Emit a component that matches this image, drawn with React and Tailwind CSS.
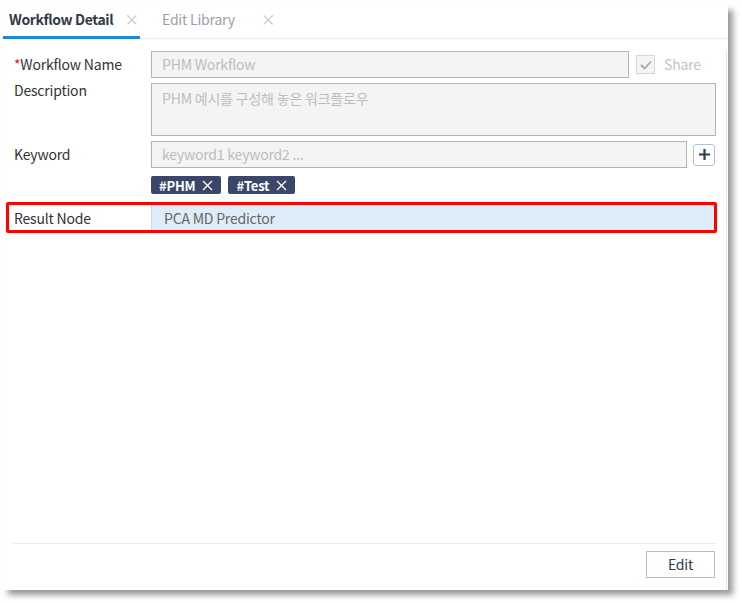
import React from 'react';

const font = { fontFamily: '"Noto Sans CJK KR", "Noto Sans", sans-serif' };

const Tag = ({ label }) => (
  <span className="inline-flex items-center h-[18px] pl-[8px] pr-[8px] gap-[7px] rounded-[2px] bg-[#3b4669] text-white text-[13px] font-bold leading-none">
    {label}
    <svg width="11" height="11" viewBox="0 0 11 11" fill="none" stroke="#fff" strokeWidth="1.3">
      <path d="M1 1l9 9M10 1l-9 9" />
    </svg>
  </span>
);

export default function App() {
  return (
    <div className="w-[742px] h-[603px] bg-white pt-[5px] pl-[3px] tracking-[-0.2px]" style={font}>
      <div className="w-[725px] h-[585px] bg-white flex flex-col shadow-[5px_5px_6px_rgba(0,0,0,0.4)]">
        {/* Tabs */}
        <div className="flex h-[34px] border-b border-[#ececec] text-[14px] whitespace-nowrap">
          <div className="relative flex items-center w-[137px] pl-[6px] pb-[4px]">
            <span className="font-bold text-[#333a45] tracking-[-0.4px]">Workflow Detail</span>
            <span className="ml-[11px] text-[#c4c4c4] text-[15px]">×</span>
            <div className="absolute left-0 right-0 bottom-[-1px] h-[3px] bg-[#1e88d8]" />
          </div>
          <div className="flex items-center pl-[22px] pb-[4px]">
            <span className="text-[#9aa0a8]">Edit Library</span>
            <span className="ml-[26px] text-[#c4c4c4] text-[15px]">×</span>
          </div>
        </div>

        {/* Body */}
        <div className="flex-1 flex flex-col border-r border-[#e6e6e6] mr-[1px] mt-[12px]">
          <div className="flex flex-col text-[14px] text-[#333] pl-[11px]">
            <div className="flex items-center h-[27px]">
              <div className="w-[137px]"><span className="text-[#d62020]">*</span>Workflow Name</div>
              <div className="w-[478px] h-[27px] border border-[#b3b3b3] bg-[#f4f4f4] flex items-center pl-[10px] text-[#bdbdbd]">PHM Workflow</div>
              <div className="ml-[7px] w-[19px] h-[19px] border border-[#d6d6d6] bg-[#f4f4f4] flex items-center justify-center">
                <svg width="12" height="10" viewBox="0 0 12 10" fill="none" stroke="#a9a9a9" strokeWidth="1.8">
                  <path d="M1 5l3.5 3.5L11 1.5" />
                </svg>
              </div>
              <span className="ml-[9px] text-[#c4c4c4]">Share</span>
            </div>

            <div className="flex mt-[5px]">
              <div className="w-[137px] mt-[-3px]">Description</div>
              <div className="w-[565px] h-[53px] border border-[#b3b3b3] bg-[#f4f4f4] pl-[10px] pt-[4px] text-[#bdbdbd] text-[14px]">PHM 예시를 구성해 놓은 워크플로우</div>
            </div>

            <div className="flex items-center mt-[5px]">
              <div className="w-[137px]">Keyword</div>
              <div className="w-[536px] h-[27px] border border-[#b3b3b3] bg-[#f4f4f4] flex items-center pl-[10px] text-[#bdbdbd]">keyword1 keyword2 ...</div>
              <div className="ml-[6px] w-[22px] h-[22px] rounded-[3px] border border-[#a9c5e6] flex items-center justify-center">
                <svg width="13" height="13" viewBox="0 0 13 13" fill="none" stroke="#2f3b5e" strokeWidth="2.2">
                  <path d="M6.5 1v11M1 6.5h11" />
                </svg>
              </div>
            </div>

            <div className="flex gap-[7px] mt-[8px] pl-[137px]">
              <Tag label="#PHM" />
              <Tag label="#Test" />
            </div>
          </div>

          <div className="mt-[8px] ml-[3px] w-[711px] h-[31px] border-[3px] border-[#ff0000] rounded-[2px] flex items-center text-[14px]">
            <div className="w-[142px] pl-[5px] pt-[1px] text-[#333]">Result Node</div>
            <div className="flex-1 h-full bg-[#deedf7] border-l border-[#c9dbe8] flex items-center pl-[12px] pt-[1px] text-[#666]">PCA MD Predictor</div>
          </div>

          <div className="flex-1" />

          <div className="mx-[10px] border-t border-[#ececec] h-[47px] flex items-start justify-end pt-[7px] pr-[1px]">
            <button className="w-[69px] h-[27px] border border-[#b8bec8] text-[14px] text-[#333a45] bg-white">Edit</button>
          </div>
        </div>
      </div>
    </div>
  );
}
